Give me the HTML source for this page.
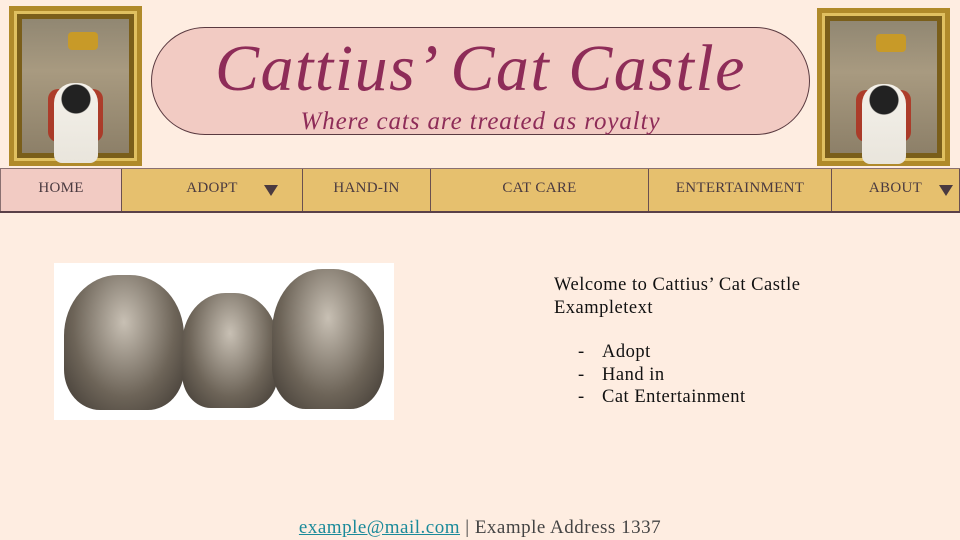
<!DOCTYPE html>
<html><head><style>
*{margin:0;padding:0;box-sizing:border-box}
body{width:960px;height:540px;background:#feede1;font-family:"Liberation Serif",serif;position:relative;overflow:hidden;color:#222}
.frame{position:absolute;border:5px solid #b08a2a;background:linear-gradient(#8d8470,#a89a80 40%,#8a7d66);box-shadow:inset 0 0 0 3px #e0c060,inset 0 0 0 8px #7a5e1a}
.frame .cat{position:absolute;left:50%;top:48%;width:44px;height:80px;margin-left:-22px;background:radial-gradient(circle at 50% 20%,#222 0 14px,transparent 15px),linear-gradient(#f4f1ea,#e9e5dc);border-radius:20px 20px 8px 8px}
.frame .cape{position:absolute;left:28%;top:52%;width:44%;height:35%;background:#b02818;border-radius:10px;opacity:.8}
.frame .crown{position:absolute;left:44%;top:14%;width:30px;height:18px;background:#c89a28;border-radius:4px}
.pill{position:absolute;left:151px;top:27px;width:659px;height:108px;border:1px solid #5a3a40;border-radius:54px;background:#f2cbc3;text-align:center}
.pill h1{font-style:italic;font-weight:normal;font-size:66px;color:#8e2c58;line-height:1;margin-top:8px;letter-spacing:1.5px}
.pill p{font-style:italic;font-size:25px;color:#8e2c58;margin-top:6px;letter-spacing:0.9px}
.nav{position:absolute;left:0;top:168px;width:960px;height:45px;border-top:1px solid #8a7070;border-bottom:2px solid #5a4048;display:flex}
.nav div{background:#e6c06e;border-left:1px solid #6a5050;height:100%;font-size:15px;color:#4a3a40;text-align:center;line-height:38px;position:relative;letter-spacing:0.3px}
.nav div:first-child{background:#f2cbc3;border-left:1px solid #8a7070}
.nav div:last-child{border-right:1px solid #6a5050}
.tri{position:absolute;top:16px;width:0;height:0;border-left:7px solid transparent;border-right:7px solid transparent;border-top:11px solid #4a3a40}
.kit{position:absolute;left:54px;top:263px;width:340px;height:157px;background:#fff;overflow:hidden}
.k{position:absolute;border-radius:45% 45% 30% 30%;background:radial-gradient(ellipse at 50% 35%,#c8c0b4,#6d6458 60%,#3e3832)}
.txt{position:absolute;left:554px;top:274px;font-size:18.5px;line-height:22.5px;color:#111;letter-spacing:0.5px}
.txt ul{list-style:none;margin-top:22px;margin-left:24px}
.txt li:before{content:"-";display:inline-block;width:24px}
.foot{position:absolute;top:517px;width:960px;text-align:center;font-size:19px;color:#444;letter-spacing:0.5px}
.foot a{color:#1a8a9a;text-decoration:underline}
</style></head><body>
<div class="frame" style="left:9px;top:6px;width:133px;height:160px"><div class="cape"></div><div class="cat"></div><div class="crown"></div></div>
<div class="frame" style="left:817px;top:8px;width:133px;height:158px"><div class="cape"></div><div class="cat"></div><div class="crown"></div></div>
<div class="pill"><h1>Cattius’ Cat Castle</h1><p>Where cats are treated as royalty</p></div>
<div class="nav">
<div style="width:121px">HOME</div>
<div style="width:181px">ADOPT<span class="tri" style="left:142px"></span></div>
<div style="width:128px">HAND-IN</div>
<div style="width:218px">CAT CARE</div>
<div style="width:183px">ENTERTAINMENT</div>
<div style="width:129px">ABOUT<span class="tri" style="left:107px"></span></div>
</div>
<div class="kit">
<div class="k" style="left:10px;top:12px;width:120px;height:135px"></div>
<div class="k" style="left:128px;top:30px;width:96px;height:115px"></div>
<div class="k" style="left:218px;top:6px;width:112px;height:140px"></div>
</div>
<div class="txt">Welcome to Cattius’ Cat Castle<br>Exampletext
<ul><li>Adopt</li><li>Hand in</li><li>Cat Entertainment</li></ul></div>
<div class="foot"><a>example@mail.com</a> | Example Address 1337</div>
</body></html>
